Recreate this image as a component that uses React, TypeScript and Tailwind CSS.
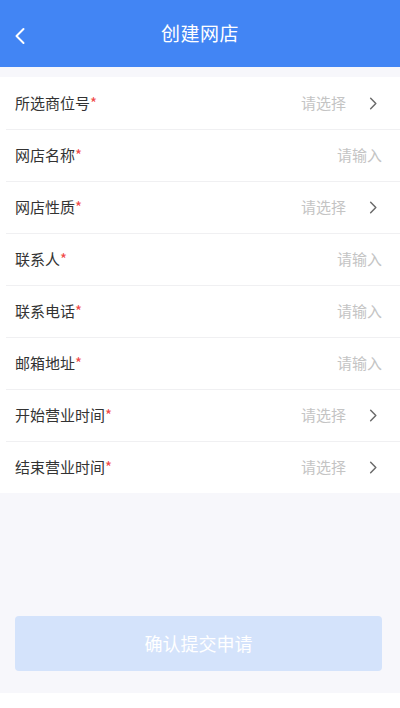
const FIELDS: { label: string; kind: "select" | "input" }[] = [
  { label: "所选商位号", kind: "select" },
  { label: "网店名称", kind: "input" },
  { label: "网店性质", kind: "select" },
  { label: "联系人", kind: "input" },
  { label: "联系电话", kind: "input" },
  { label: "邮箱地址", kind: "input" },
  { label: "开始营业时间", kind: "select" },
  { label: "结束营业时间", kind: "select" }
];

function Chevron({ className }: { className?: string }) {
  return (
    <svg className={className} viewBox="0 0 10 16" fill="none" stroke="currentColor" strokeWidth="1.6" strokeLinecap="round" strokeLinejoin="round">
      <path d="M2.5 2.5 L8 8 L2.5 13.5" />
    </svg>
  );
}

export default function App() {
  return (
    <main
      className="flex h-[708px] w-[400px] flex-col bg-white"
      style={{ fontFamily: '"Noto Sans CJK SC", "Noto Sans", sans-serif' }}
    >
      <header className="relative flex h-[67px] shrink-0 items-center justify-center bg-[#4285f4]">
        <svg className="absolute left-[14px] top-[27px] h-[18px] w-[12px] text-white" viewBox="0 0 12 18" fill="none" stroke="currentColor" strokeWidth="2" strokeLinecap="round" strokeLinejoin="round">
          <path d="M9.5 2 L2.5 9 L9.5 16" />
        </svg>
        <h1 className="text-[19px] font-normal tracking-[0.5px] text-white">创建网店</h1>
      </header>

      <div className="flex flex-1 flex-col bg-[#f7f7fb] pt-[10px]">
        <ul className="bg-white">
          {FIELDS.map((f, i) => (
            <li className="relative flex h-[52px] items-center pl-[15px] pr-[18px]" key={f.label}>
              {i > 0 && <span className="absolute left-[6px] right-0 top-0 h-px bg-[#f0f0f2]" />}
              <span className="text-[15px] text-[#333]">
                {f.label}
                <span className="text-[#f04848]">*</span>
              </span>
              <span className="ml-auto flex items-center">
                <span className="text-[15px] text-[#c4c4c4]">{f.kind === "select" ? "请选择" : "请输入"}</span>
                {f.kind === "select" && <Chevron className="ml-[22px] mr-[4px] h-[15px] w-[10px] text-[#6b6b6b]" />}
              </span>
            </li>
          ))}
        </ul>

        <div className="mt-auto pb-[22px] pl-[15px] pr-[18px]">
          <button className="flex h-[55px] w-full items-center justify-center rounded-[4px] bg-[#d4e3fb] text-[18px] text-white">
            确认提交申请
          </button>
        </div>
      </div>
      <div className="h-[15px] shrink-0 bg-white" />
    </main>
  );
}
